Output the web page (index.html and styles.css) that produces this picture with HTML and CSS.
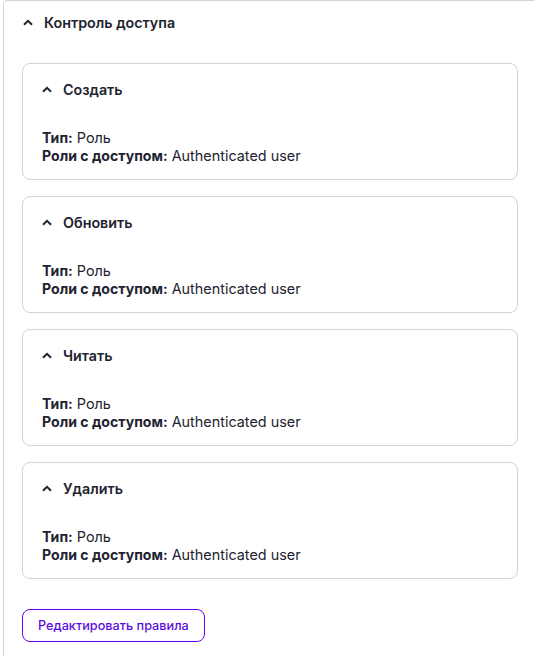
FILE: index.html
```html
<!DOCTYPE html>
<html lang="ru">
<head>
<meta charset="utf-8">
<link rel="stylesheet" href="styles.css">
</head>
<body>
<section class="panel">
  <div class="panel-head">
    <svg class="chev" width="10" height="7" viewBox="0 0 10 7"><path d="M1 5.8 L5 1.8 L9 5.8" fill="none" stroke="#222330" stroke-width="2"/></svg>
    <span>Контроль доступа</span>
  </div>
  <div class="panel-body">
    <div class="card">
      <div class="card-head">
        <svg class="chev" width="10" height="7" viewBox="0 0 10 7"><path d="M1 5.8 L5 1.8 L9 5.8" fill="none" stroke="#222330" stroke-width="2"/></svg>
        <span>Создать</span>
      </div>
      <div class="card-body">
        <div><b>Тип:</b> Роль</div>
        <div><b>Роли с доступом:</b> Authenticated user</div>
      </div>
    </div>
    <div class="card">
      <div class="card-head">
        <svg class="chev" width="10" height="7" viewBox="0 0 10 7"><path d="M1 5.8 L5 1.8 L9 5.8" fill="none" stroke="#222330" stroke-width="2"/></svg>
        <span>Обновить</span>
      </div>
      <div class="card-body">
        <div><b>Тип:</b> Роль</div>
        <div><b>Роли с доступом:</b> Authenticated user</div>
      </div>
    </div>
    <div class="card">
      <div class="card-head">
        <svg class="chev" width="10" height="7" viewBox="0 0 10 7"><path d="M1 5.8 L5 1.8 L9 5.8" fill="none" stroke="#222330" stroke-width="2"/></svg>
        <span>Читать</span>
      </div>
      <div class="card-body">
        <div><b>Тип:</b> Роль</div>
        <div><b>Роли с доступом:</b> Authenticated user</div>
      </div>
    </div>
    <div class="card">
      <div class="card-head">
        <svg class="chev" width="10" height="7" viewBox="0 0 10 7"><path d="M1 5.8 L5 1.8 L9 5.8" fill="none" stroke="#222330" stroke-width="2"/></svg>
        <span>Удалить</span>
      </div>
      <div class="card-body">
        <div><b>Тип:</b> Роль</div>
        <div><b>Роли с доступом:</b> Authenticated user</div>
      </div>
    </div>
    <button class="btn">Редактировать правила</button>
  </div>
</section>
</body>
</html>
```
FILE: styles.css
```css
html, body {
  margin: 0;
  padding: 0;
  background: #fff;
  overflow: hidden;
}
body {
  font-family: Inter, "Noto Sans", sans-serif;
  color: #222330;
  font-size: 14px;
}
.panel {
  margin-left: 3px;
  width: 532px;
  min-height: 700px;
  border: 1px solid #d3d4d9;
  border-radius: 4px;
}
.panel-head {
  display: flex;
  align-items: center;
  gap: 11px;
  height: 42px;
  padding-left: 19px;
  font-weight: 600;
  font-size: 14.3px;
}
.panel-body {
  padding: 20px 18px 0 18px;
  display: flex;
  flex-direction: column;
  gap: 16px;
}
.card {
  border: 1px solid #d3d4d9;
  border-radius: 8px;
  height: 117px;
  box-sizing: border-box;
  padding: 0 19px;
}
.card-head {
  display: flex;
  align-items: center;
  gap: 11px;
  height: 50px;
  font-weight: 600;
  font-size: 14.3px;
}
.chev { display: block; flex: none; }
.card-body {
  padding-top: 15px;
  line-height: 18px;
  font-size: 14.4px;
}
.card-body b { font-weight: 700; font-size: 14.1px; }
.btn {
  align-self: flex-start;
  margin-top: 14px;
  height: 33px;
  padding: 0 15px;
  border: 1px solid #6a00f5;
  border-radius: 8px;
  background: #fff;
  color: #5b0ee0;
  font-family: Inter, "Noto Sans", sans-serif;
  font-size: 12.7px;
  font-weight: 500;
}
```
